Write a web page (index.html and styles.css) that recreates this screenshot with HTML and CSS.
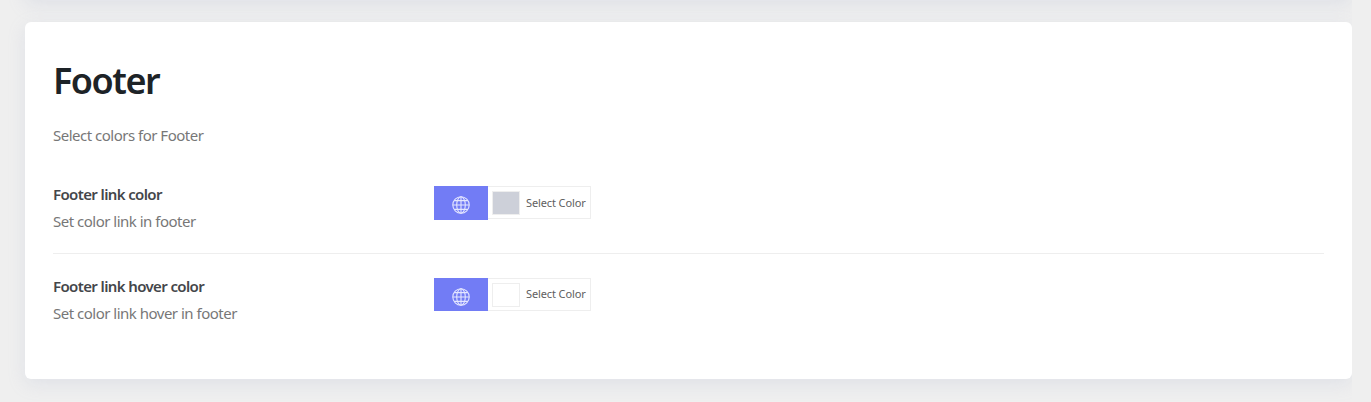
FILE: index.html
```html
<!DOCTYPE html>
<html lang="en">
<head>
<meta charset="utf-8">
<title>Footer colors</title>
<link rel="stylesheet" href="styles.css">
</head>
<body>
<svg class="sprite" aria-hidden="true">
  <symbol id="globe" viewBox="0 0 18 18">
    <g fill="none" stroke="currentColor" stroke-width="1.1">
      <circle cx="9" cy="9" r="8.2"/>
      <ellipse cx="9" cy="9" rx="4.3" ry="8.2"/>
      <path d="M9 .8v16.4M.8 9h16.4M2.2 4.6h13.6M2.2 13.4h13.6"/>
    </g>
  </symbol>
</svg>
<main class="panels">
  <div class="card card-previous"></div>
  <section class="card">
    <h1 class="title">Footer</h1>
    <p class="intro">Select colors for Footer</p>
    <div class="option">
      <div class="label">
        <h2 class="name">Footer link color</h2>
        <p class="hint">Set color link in footer</p>
      </div>
      <div class="control">
        <button class="global"><svg class="globe"><use href="#globe"/></svg></button>
        <button class="picker"><span class="swatch swatch-gray"></span><span class="picker-text">Select Color</span></button>
      </div>
    </div>
    <div class="option option-last">
      <div class="label">
        <h2 class="name">Footer link hover color</h2>
        <p class="hint">Set color link hover in footer</p>
      </div>
      <div class="control control-short">
        <button class="global"><svg class="globe"><use href="#globe"/></svg></button>
        <button class="picker"><span class="swatch"></span><span class="picker-text">Select Color</span></button>
      </div>
    </div>
  </section>
</main>
</body>
</html>
```
FILE: styles.css
```css
* { box-sizing: border-box; }
body {
  margin: 0;
  height: 402px;
  overflow: hidden;
  background: #efefef;
  font-family: "Segoe UI", "Noto Sans", sans-serif;
}
.sprite { display: none; }
.panels {
  width: 1352px;
  height: 402px;
  padding-left: 25px;
  overflow: hidden;
}
.card {
  height: 357px;
  padding: 28px;
  background: #fff;
  border-radius: 6px;
  box-shadow: 0 5px 18px rgba(154, 165, 200, .18);
}
.card-previous { margin-top: -357px; margin-bottom: 22px; }
h1, h2, p { margin: 0; white-space: nowrap; }
.title {
  padding-top: 4px;
  font-size: 36px;
  line-height: 54px;
  font-weight: 600;
  letter-spacing: -1.5px;
  color: #1d2327;
}
.intro, .hint { font-size: 15px; line-height: 22px; letter-spacing: -.5px; color: #777; }
.intro { margin-top: 16px; }
.option {
  display: flex;
  height: 87px;
  margin-top: 21px;
  padding-top: 16px;
  border-bottom: 1px solid #eee;
}
.option-last { margin-top: 0; height: 92px; padding-top: 21px; border: 0; }
.label { width: 381px; }
.name { font-size: 15px; line-height: 22px; font-weight: 600; letter-spacing: -.62px; color: #44464a; }
.hint { margin-top: 5px; }
.control { display: flex; align-items: flex-start; padding-top: 3px; }
button { margin: 0; font-family: inherit; }
.global {
  display: flex;
  justify-content: center;
  width: 54px;
  height: 34px;
  padding: 10px 0 0;
  border: 0;
  background: #727cf5;
  color: #e4e6ff;
}
.globe { width: 18px; height: 18px; }
.picker {
  display: flex;
  align-items: center;
  width: 103px;
  height: 33px;
  padding: 0 0 0 4px;
  border: 1px solid #eee;
  border-left: 0;
  background: #fff;
}
.swatch { width: 28px; height: 24px; border: 1px solid #eee; background: #fff; }
.swatch-gray { background: #cdd0d9; }
.picker-text { margin-left: 6px; font-size: 11px; line-height: 16px; letter-spacing: -.12px; white-space: nowrap; color: #606060; }
.control-short .global { height: 33px; }
.control-short .picker-text { padding-bottom: 2px; }
```
